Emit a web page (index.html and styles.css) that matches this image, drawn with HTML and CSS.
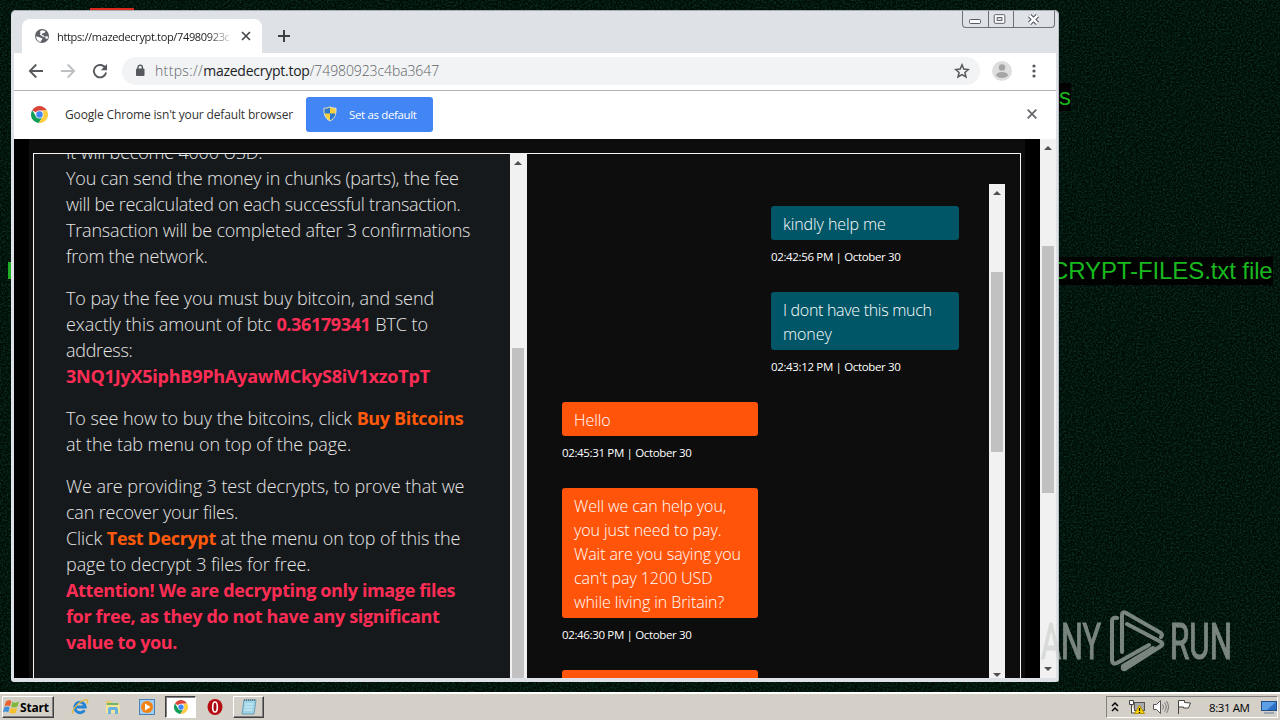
FILE: index.html
```
<!DOCTYPE html>
<html lang="en">
<head>
  <meta charset="UTF-8">
  <title>https://mazedecrypt.top/74980923c4ba3647</title>
  <link rel="stylesheet" href="styles.css">
</head>
<body>

  <svg width="0" height="0" class="defs">
    <symbol id="chrome" viewBox="0 0 16 16">
      <path d="M8 8 1.1 4A8 8 0 0 1 14.9 4L8 4.4z" fill="#db4437"/>
      <path d="M1.1 4A8 8 0 0 0 7.3 16L11.2 9.8 8 8 4.9 9.8z" fill="#0f9d58"/>
      <path d="M14.9 4A8 8 0 0 1 7.3 16L11.4 9.5 10.5 4.4z" fill="#ffcd40"/>
      <circle cx="8" cy="8" r="3.8" fill="#f1f1f1"/>
      <circle cx="8" cy="8" r="3" fill="#4285f4"/>
    </symbol>
  </svg>

  <div class="desktop">
    <svg class="grain" width="1280" height="692">
      <filter id="noise"><feTurbulence type="fractalNoise" baseFrequency="0.55" numOctaves="2"/><feColorMatrix values="0 0 0 0 0.02  0 0 0 0 0.26  0 0 0 0 0.12  0 0.7 0 0 -0.28"/></filter>
      <rect width="1280" height="692" filter="url(#noise)"/>
    </svg>
    <span class="behind-top"></span>
    <span class="wall-text wall-s">s</span>
    <span class="wall-text wall-files">CRYPT-FILES.txt file</span>
    <span class="wall-bar"></span>

    <div class="window">
      <div class="tabstrip">
        <div class="tab">
          <svg width="16" height="16" viewBox="0 0 16 16"><circle cx="8" cy="8" r="7" fill="#5f6368"/><path d="M2.2 8.2 6 9.4l2.500 1.200-.8 1.800-1 .2.2 1.400C4 13.800 2 11 2.200 8.200zM6 3.200l2-.9 3.400.7-.6 1.800-2.400.6-.8 1.600 2.200.6.7 1.200 2.400-.5 1.300.4-.9 2.200-1.500-.2-.5-1.400-3-.7-2.400-2L6.400 5z" fill="#fff"/></svg>
          <span class="tab-title">https://mazedecrypt.top/74980923c</span>
          <svg width="10" height="10" viewBox="0 0 10 10"><path d="M1 1l8 8M9 1l-8 8" stroke="#45494d" stroke-width="1.700"/></svg>
        </div>
        <svg class="new-tab" width="12" height="12" viewBox="0 0 12 12"><path d="M6 0v12M0 6h12" stroke="#3c4043" stroke-width="2"/></svg>
        <div class="controls">
          <svg width="25" height="16" viewBox="0 0 25 16"><rect x="6.500" y="8.500" width="11" height="4" rx="1" fill="#fff" stroke="#555966"/></svg>
          <svg width="25" height="16" viewBox="0 0 25 16"><rect x="5.500" y="3.500" width="11" height="9" rx="1" fill="#fff" stroke="#555966"/><rect x="8.500" y="6.500" width="5" height="3" fill="#dee1e6" stroke="#555966"/></svg>
          <svg width="41" height="16" viewBox="0 0 41 16"><path d="M16 4.500l8 8M24 4.500l-8 8" stroke="#555966" stroke-width="4.600"/><path d="M16 4.500l8 8M24 4.500l-8 8" stroke="#fff" stroke-width="2.400"/></svg>
        </div>
      </div>

      <div class="toolbar">
        <svg width="16" height="16" viewBox="0 0 16 16"><path d="M15 8H2M8.300 1.500 1.800 8l6.500 6.500" fill="none" stroke="#55595d" stroke-width="1.800"/></svg>
        <svg width="16" height="16" viewBox="0 0 16 16"><path d="M1 8h13M7.700 1.500 14.200 8l-6.500 6.500" fill="none" stroke="#bdc0c3" stroke-width="1.800"/></svg>
        <svg width="16" height="16" viewBox="0 0 16 16"><path d="M13.600 5.400A6.200 6.200 0 1 0 14.100 9.500" fill="none" stroke="#55595d" stroke-width="1.900"/><path d="M15 1v6.200H8.800z" fill="#55595d"/></svg>
        <div class="omnibox">
          <svg width="10" height="13" viewBox="0 0 10 13"><rect x="1" y="4.500" width="8.500" height="7.500" rx="1" fill="#55595d"/><path d="M3 5V3.300a2.200 2.200 0 0 1 4.400 0V5" fill="none" stroke="#55595d" stroke-width="1.400"/></svg>
          <span class="url"><span class="scheme">https://</span><b>mazedecrypt.top</b>/74980923c4ba3647</span>
          <svg width="16" height="16" viewBox="0 0 16 16"><path d="M8 1.800l1.800 4.300 4.600.4-3.500 3 1.100 4.500L8 11.600 4 14l1.100-4.500-3.500-3 4.600-.4z" fill="none" stroke="#55595d" stroke-width="1.500"/></svg>
        </div>
        <svg class="avatar" width="20" height="20" viewBox="0 0 20 20"><circle cx="10" cy="10" r="10" fill="#dedede"/><circle cx="10" cy="6.500" r="3.200" fill="#a5a5a5"/><ellipse cx="10" cy="14" rx="6" ry="2.900" fill="#a5a5a5"/></svg>
        <svg width="4" height="14" viewBox="0 0 4 14"><circle cx="2" cy="2" r="1.600" fill="#55595d"/><circle cx="2" cy="7" r="1.600" fill="#55595d"/><circle cx="2" cy="12" r="1.600" fill="#55595d"/></svg>
      </div>

      <div class="infobar">
        <svg width="17" height="17"><use href="#chrome"/></svg>
        <span class="info-text">Google Chrome isn't your default browser</span>
        <button class="set-default">
          <svg width="14" height="16" viewBox="0 0 14 16"><path d="M7 .8C9 2 11 2.300 13 2.200c.3 6-1 10-6 12.800C2 12.200.700 8.200 1 2.200 3 2.300 5 2 7 .8z" fill="#f5cf3c" stroke="#e8e4d0"/><path d="M7 1.600v6H1.600C1.400 6 1.400 4.500 1.500 2.800 3.500 2.800 5.400 2.400 7 1.600zM7 7.600h5.400c-.6 3.200-2.200 5.300-5.400 6.900z" fill="#2878d0"/></svg>
          Set as default
        </button>
        <svg class="info-close" width="10" height="10" viewBox="0 0 10 10"><path d="M.7.7l8.600 8.600M9.300.7.7 9.300" stroke="#66696d" stroke-width="1.800"/></svg>
      </div>

      <div class="page">
        <div class="site">
          <div class="frame">
            <div class="info">
              <p class="cut tight">It will become 4000 USD.<br>
                You can send the money in chunks (parts), the fee<br>
                <span class="tighter">will be recalculated on each successful transaction.</span><br>
                Transaction will be completed after 3 confirmations<br>
                from the network.</p>
              <p>To pay the fee you must buy bitcoin, and send<br>
                exactly this amount of btc <b class="red">0.36179341</b> BTC to<br>
                <span class="tighter">address:</span><br>
                <b class="red address">3NQ1JyX5iphB9PhAyawMCkyS8iV1xzoTpT</b></p>
              <p>To see how to buy the bitcoins, click <b class="orange">Buy Bitcoins</b><br>
                at the tab menu on top of the page.</p>
              <p>We are providing 3 test decrypts, to prove that we<br>
                <span class="tight">can recover your files.</span><br>
                Click <b class="orange">Test Decrypt</b> at the menu on top of this the<br>
                page to decrypt 3 files for free.<br>
                <b class="red">Attention! We are decrypting only image files<br>
                for free, as they do not have any significant<br>
                value to you.</b></p>
            </div>
            <div class="scroll scroll-info"><i class="up"></i><div class="thumb"></div></div>
            <div class="chat">
              <div class="messages">
                <div class="msg mine"><div class="bubble">kindly help me</div><time>02:42:56 PM | October 30</time></div>
                <div class="msg mine"><div class="bubble"><span class="tighter">I dont have this much</span><br>money</div><time>02:43:12 PM | October 30</time></div>
                <div class="msg"><div class="bubble">Hello</div><time>02:45:31 PM | October 30</time></div>
                <div class="msg"><div class="bubble">Well we can help you,<br>you just need to pay.<br>Wait are you saying you<br>can't pay 1200 USD<br>while living in Britain?</div><time>02:46:30 PM | October 30</time></div>
                <div class="msg"><div class="bubble">&nbsp;</div></div>
              </div>
              <div class="scroll scroll-chat"><i class="up"></i><div class="thumb"></div><i class="down"></i></div>
            </div>
          </div>
        </div>
        <div class="scroll scroll-page"><i class="up"></i><div class="thumb"></div><i class="down"></i></div>
      </div>
    </div>

    <svg class="watermark" width="210" height="70" viewBox="0 0 210 70">
      <text x="3" y="50" textLength="60" lengthAdjust="spacingAndGlyphs">ANY</text>
      <text x="132" y="50" textLength="62" lengthAdjust="spacingAndGlyphs">RUN</text>
      <path d="M79 9q-5-1-5 3v39q0 5 5 3l32-18M84 43V6q0-4 4-2l35 20q2 2 0 4M89 15l34 18q3 2 0 4L87 60q-3 1-2-3l30-18" fill="none" stroke-width="4" stroke-linejoin="round" stroke-linecap="round"/>
    </svg>
  </div>

  <div class="taskbar">
    <button class="start">
      <svg width="17" height="16" viewBox="0 0 17 16"><path d="M3 2.500c2-1.500 4-1.500 5.500-.2L7 7.300C5.500 6.200 3.500 6.200 1.500 7.500z" fill="#e8602c"/><path d="M9.500 2.700c2 1.300 4 1.300 6.500-.2l-1.500 5c-2 1.300-4.500 1.300-6.300.2z" fill="#7fb83a"/><path d="M1.200 8.500c2-1.300 4-1.300 5.500-.2l-1.500 5c-1.500-1.100-3.500-1.100-5.200.2z" fill="#3f8fdc"/><path d="M7.800 8.800c2 1.100 4.300 1.100 6.400-.1l-1.500 5c-2 1.200-4.500 1.200-6.400.1z" fill="#f5c02c"/></svg>
      Start
    </button>
    <div class="quick">
      <svg width="18" height="18" viewBox="0 0 18 18"><path d="M13.500 12.300A5.300 5.300 0 1 1 14.300 9H5" fill="none" stroke="#2383d5" stroke-width="2.800"/><path d="M2 15.800C-1 14 8 2.500 15 1.600c2.500-.2 2 2.400.8 4" fill="none" stroke="#e4b73c" stroke-width="1.300"/></svg>
      <svg width="18" height="18" viewBox="0 0 18 18"><path d="M2 3h5l1 2h7v10H2z" fill="#e8ca6c"/><path d="M3 5h11v2H3z" fill="#72b567"/><path d="M2 7h14v8H2z" fill="#f6e39a"/><path d="M4 16v-5q0-2 2-2h6q2 0 2 2v5h-3v-4H7v4z" fill="#66b3e0"/></svg>
      <svg width="18" height="18" viewBox="0 0 18 18"><rect x="1.500" y="1.500" width="15" height="15" fill="#a5ccf0" stroke="#4584bd"/><circle cx="9" cy="9" r="6" fill="#f28416"/><path d="M7 5.500l5.500 3.500L7 12.500z" fill="#fff"/></svg>
      <span class="task pressed"><svg width="14" height="14"><use href="#chrome"/></svg></span>
      <svg width="18" height="18" viewBox="0 0 18 18"><ellipse cx="9" cy="9" rx="7.500" ry="8" fill="#b50d12"/><ellipse cx="9" cy="9" rx="2.300" ry="5" fill="#a30b10" stroke="#fff" stroke-width="1.600"/></svg>
      <span class="task"><svg width="18" height="18" viewBox="0 0 18 18"><path d="M4 2h12l-2 14H2z" fill="#9fd3e6" stroke="#6aa0b5"/><path d="M4 2h12" stroke="#4f6670" stroke-width="1.500" stroke-dasharray="1 1"/><path d="M5 6h8M4.700 9h8M4.300 12h8" stroke="#d9f1f8"/></svg></span>
    </div>
    <div class="tray">
      <svg width="8" height="12" viewBox="0 0 8 12"><path d="M1 5l3-3 3 3M1 10l3-3 3 3" fill="none" stroke="#000" stroke-width="1.500"/></svg>
      <svg class="net" width="18" height="16" viewBox="0 0 18 16"><path d="M1.500 1.500h4v4h-4zM3.500 6v8h4" fill="#fff" stroke="#444"/><rect x="6.500" y="3.500" width="10" height="8" fill="#aaa" stroke="#555"/><path d="M11.500 6.500l5 8h-10z" fill="#f7d308" stroke="#b59000"/><path d="M11.500 9v3M11.500 13v1" stroke="#000" stroke-width="1.200"/></svg>
      <svg class="vol" width="18" height="16" viewBox="0 0 18 16"><path d="M1.500 5.500h3l4-4v13l-4-4h-3z" fill="#fff" stroke="#555"/><path d="M10.500 5.500q2 2.500 0 5M12.500 3.500q3.500 4.500 0 9M14.500 2q4 6 0 12" fill="none" stroke="#777"/></svg>
      <svg class="flag" width="17" height="16" viewBox="0 0 17 16"><path d="M2.500 15V1.500h6v2l6 .5-2 5H7.500V8h-5" fill="#fff" stroke="#444"/></svg>
      <span class="clock">8:31 AM</span>
      <svg width="16" height="14" viewBox="0 0 16 14"><rect x=".5" y="1.500" width="15" height="9" fill="#2c6fc4" stroke="#234f88"/><path d="M1 2h14l-9 8H1z" fill="#5d9fe6"/><path d="M3 13h10" stroke="#8a98a8" stroke-width="1.500"/></svg>
    </div>
  </div>

</body>
</html>
```
FILE: styles.css
```
* {
  box-sizing: border-box;
}

body {
  margin: 0;
  width: 1280px;
  height: 720px;
  overflow: hidden;
  display: flex;
  flex-direction: column;
  font-family: "Open Sans", "Noto Sans", sans-serif;
}

svg {
  display: block;
  flex: none;
}

button {
  font-family: inherit;
  padding: 0;
}

.defs {
  position: absolute;
}

/* desktop */
.desktop {
  position: relative;
  height: 692px;
  background: #000d07;
  overflow: hidden;
}

.grain {
  position: absolute;
  left: 0;
  top: 0;
}

.behind-top {
  position: absolute;
  left: 90px;
  top: 8px;
  width: 44px;
  height: 4px;
  background: #d9281b;
}

.wall-text {
  position: absolute;
  background: #020202;
  color: #19b81e;
  font-family: "Liberation Sans", Arial, sans-serif;
  font-size: 24px;
  line-height: 28px;
  white-space: nowrap;
}

.wall-s {
  left: 1059px;
  top: 83px;
}

.wall-files {
  left: 1051px;
  top: 257px;
  letter-spacing: -0.1px;
}

.wall-bar {
  position: absolute;
  left: 8px;
  top: 262px;
  width: 3px;
  height: 17px;
  background: #1fae24;
}

/* browser window */
.window {
  position: absolute;
  left: 11px;
  top: 10px;
  width: 1048px;
  height: 672px;
  padding: 1px 3px 4px;
  background: #dee1e6;
  border-radius: 5px 5px 3px 3px;
  box-shadow: inset 0 1px #a9adb3, inset -1px 0 #b9bcc2;
}

.tabstrip {
  display: flex;
  height: 42px;
}

.tab {
  display: flex;
  align-items: center;
  width: 240px;
  height: 34px;
  margin: 8px 0 0 8px;
  padding: 0 11px 0 12px;
  background: #fff;
  border-radius: 8px 8px 0 0;
}

.tab-title {
  flex: 1;
  margin: 0 7px 0 7px;
  overflow: hidden;
  white-space: nowrap;
  font-size: 11px;
  letter-spacing: -0.34px;
  color: #222;
  mask-image: linear-gradient(90deg, #000 85%, transparent);
}

.new-tab {
  margin: 19px 0 0 16px;
}

.controls {
  display: flex;
  height: 17px;
  margin: 0 1px 0 auto;
  border: 1px solid #6d7076;
  border-top: 0;
  border-radius: 0 0 4px 4px;
}

.controls svg + svg {
  border-left: 1px solid #6d7076;
}

.toolbar {
  display: flex;
  align-items: center;
  gap: 16px;
  height: 38px;
  padding: 0 20px 2px 14px;
  background: #fff;
  border-bottom: 1px solid #b0b2b5;
}

.omnibox {
  display: flex;
  align-items: center;
  flex: 1;
  height: 28px;
  margin-left: -2px;
  padding: 0 10px 0 13px;
  background: #f1f3f4;
  border-radius: 14px;
}

.url {
  flex: 1;
  margin-left: 10px;
  font-size: 14px;
  font-weight: 300;
  letter-spacing: -0.1px;
  color: #5f6368;
}

.scheme {
  letter-spacing: 0.35px;
}

.url b {
  font-weight: 400;
  letter-spacing: -0.25px;
  color: #202124;
}

.avatar {
  margin: 0 4px 0 -4px;
}

.infobar {
  display: flex;
  align-items: center;
  height: 48px;
  padding: 0 19px 2px 17px;
  background: #fff;
}

.info-text {
  width: 229px;
  margin: 0 12px 0 17px;
  white-space: nowrap;
  font-size: 12px;
  letter-spacing: -0.15px;
  color: #333;
}

.set-default {
  display: flex;
  align-items: center;
  gap: 12px;
  width: 127px;
  height: 35px;
  padding-left: 17px;
  background: #4285f4;
  color: #fff;
  border: 0;
  border-radius: 3px;
  font-size: 11.5px;
  letter-spacing: -0.35px;
  white-space: nowrap;
}

.info-close {
  margin-left: auto;
}

/* page */
.page {
  display: flex;
  height: 539px;
  padding-left: 15px;
  background: #000;
}

.site {
  width: 996px;
  margin-right: 15px;
  padding: 14px 4px 0;
  background: #0d0d0d;
}

.frame {
  display: flex;
  height: 525px;
  border: 1px solid #f4f4f4;
  border-bottom: 0;
  overflow: hidden;
}

.info {
  width: 476px;
  padding-left: 32px;
  background: #16191c;
  color: #e6e6e6;
  font-size: 18px;
  font-weight: 300;
  line-height: 26px;
  letter-spacing: -0.07px;
  white-space: nowrap;
  overflow: hidden;
}

.info p {
  margin: 0 0 16px;
}

.info .cut {
  margin-top: -15px;
}

.info b {
  font-weight: 700;
  letter-spacing: -0.36px;
}

.info .address {
  letter-spacing: -0.22px;
}

.tight {
  letter-spacing: -0.19px;
}

.tighter {
  letter-spacing: -0.3px;
}

.red {
  color: #ff2d55;
}

.orange {
  color: #ff5a0c;
}

.scroll {
  display: flex;
  flex-direction: column;
  align-items: center;
  width: 16px;
  background: #f1f1f1;
}

.thumb {
  width: 12px;
  background: #c1c1c1;
}

.up {
  margin-top: 7px;
  border: 4px solid transparent;
  border-top: 0;
  border-bottom-color: #505050;
}

.down {
  margin: auto 0 1px;
  border: 4px solid transparent;
  border-bottom: 0;
  border-top-color: #505050;
}

.scroll-info {
  width: 17px;
  padding-right: 1px;
}

.scroll-info .thumb {
  height: 330px;
  margin-top: 183px;
}

.chat {
  display: flex;
  flex: 1;
  padding: 30px 15px 0 35px;
}

.messages {
  display: flex;
  flex-direction: column;
  width: 397px;
  padding-top: 22px;
}

.scroll-chat {
  height: 494px;
  margin-left: auto;
}

.scroll-chat .thumb {
  height: 180px;
  margin-top: 77px;
}

.scroll-page .thumb {
  height: 247px;
  margin-top: 96px;
}

.scroll-page .down {
  margin-bottom: 7px;
}

.msg {
  width: 196px;
}

.mine {
  width: 188px;
  align-self: flex-end;
}

.bubble {
  padding: 6px 12px 4px;
  background: #ff540a;
  color: #fff;
  border-radius: 3px;
  font-size: 16px;
  font-weight: 300;
  line-height: 24px;
  letter-spacing: -0.08px;
  white-space: nowrap;
}

.mine .bubble {
  background: #005566;
}

.msg time {
  display: block;
  height: 52px;
  line-height: 34px;
  font-size: 11.5px;
  letter-spacing: -0.35px;
  color: #fff;
  white-space: nowrap;
}

/* watermark */
.watermark {
  position: absolute;
  left: 1038px;
  top: 609px;
  opacity: 0.6;
  stroke: #c8cec9;
}

.watermark text {
  font-family: "Roboto", sans-serif;
  font-size: 50px;
  fill: #c8cec9;
  stroke-width: 1.2;
}

/* taskbar */
.taskbar {
  display: flex;
  align-items: center;
  height: 28px;
  padding: 2px 2px 0;
  background: #d4d0c8;
  box-shadow: inset 0 2px #fff;
}

.start,
.task {
  display: flex;
  align-items: center;
  height: 22px;
  background: #d4d0c8;
  border: 1px solid;
  border-color: #fff #404040 #404040 #fff;
  box-shadow: inset -1px -1px #808080;
}

.start {
  width: 52px;
  font-size: 12px;
  font-weight: 700;
  letter-spacing: -0.2px;
}

.quick {
  display: flex;
  align-items: center;
  margin-left: 17px;
}

.quick > svg {
  margin-right: 15px;
}

.quick > svg:nth-child(2) {
  margin-right: 16px;
}

.quick > svg:nth-child(3) {
  margin-right: 9px;
}

.quick > svg:nth-child(5) {
  margin: 0 9px 0 10px;
}

.task {
  justify-content: center;
  width: 31px;
}

.pressed {
  background: #fff;
  border-color: #404040 #fff #fff #404040;
  box-shadow: inset 1px 1px #808080;
}

.tray {
  display: flex;
  align-items: center;
  width: 172px;
  height: 22px;
  margin-left: auto;
  padding: 0 0 0 4px;
  border: 1px solid;
  border-color: #808080 #fff #fff #808080;
}

.net {
  margin-left: 9px;
}

.vol {
  margin-left: 6px;
}

.flag {
  margin-left: 6px;
}

.clock {
  width: 41px;
  margin: 0 11px 0 16px;
  white-space: nowrap;
  font-size: 11.5px;
  letter-spacing: -0.4px;
}
```
